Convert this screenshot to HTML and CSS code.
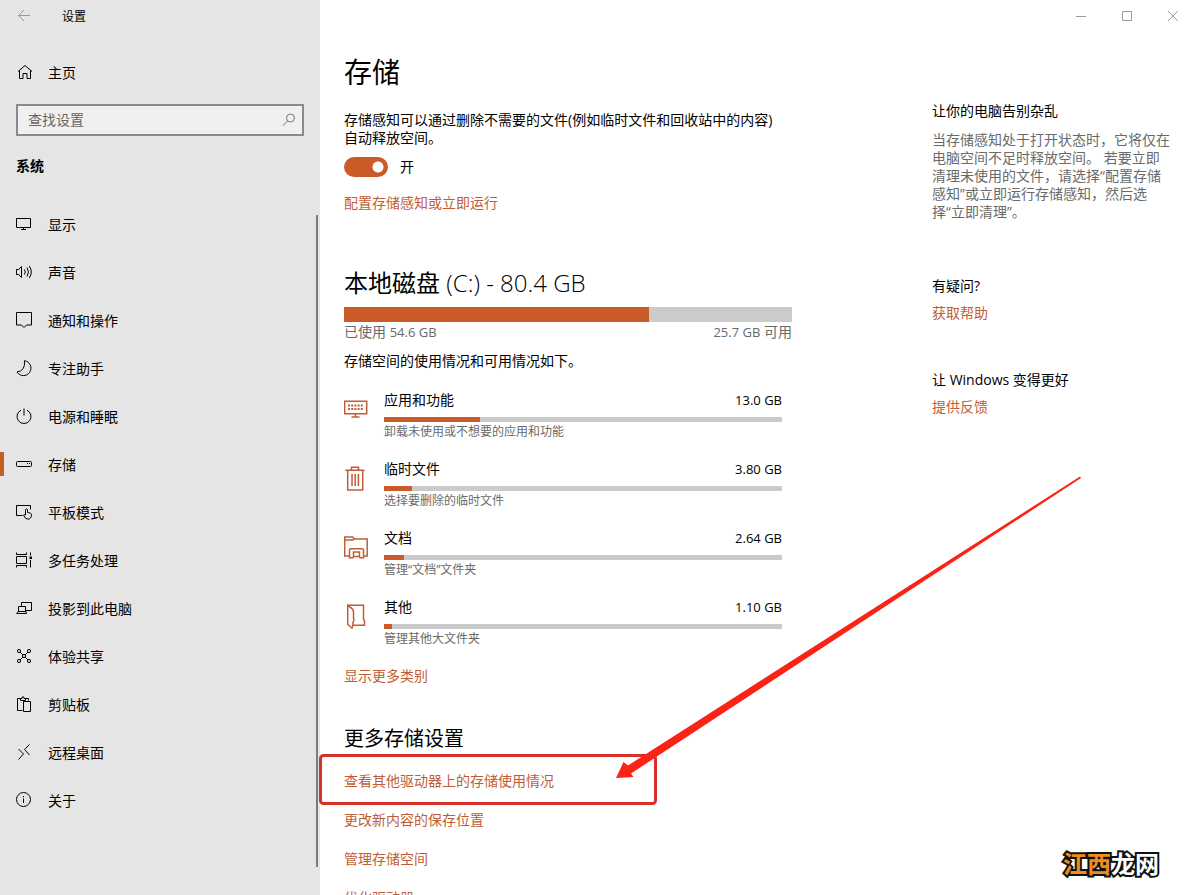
FILE: index.html
```html
<!DOCTYPE html>
<html lang="zh-CN">
<head>
<meta charset="utf-8">
<title>设置</title>
<meta name="viewport" content="width=device-width, initial-scale=1">
<link rel="stylesheet" href="styles.css">
</head>
<body>
<div class="window">
  <aside class="sidebar">
    <div class="app-bar">
      <button class="back" type="button" aria-label="返回">
        <svg width="14" height="14" viewBox="0 0 14 14"><path d="M13 6.500H1.500M7 1 1.500 6.500 7 12"/></svg>
      </button>
      <span class="app-name">设置</span>
    </div>
    <a class="home" href="#">
      <svg class="icon" width="16" height="16" viewBox="0 0 16 16"><path d="M2 7.500 9 1.500l7 6M3.500 6.500v8h3.500v-5h4v5h3.500v-8"/></svg>
      <span>主页</span>
    </a>
    <div class="search">
      <input type="search" aria-label="查找设置" placeholder="查找设置">
      <svg width="14" height="14" viewBox="0 0 14 14"><circle cx="8.500" cy="5" r="4"/><path d="M5.500 8 1 12.700"/></svg>
    </div>
    <h2 class="group">系统</h2>
    <nav class="nav">
      <a href="#"><svg class="icon" width="16" height="16" viewBox="0 0 16 16"><path d="M.5 2.500h14v9H.5zM7.500 11.500v2M5 13.500h5"/></svg><span>显示</span></a>
      <a href="#"><svg class="icon" width="16" height="16" viewBox="0 0 16 16"><path d="M.5 5.500h2.200L5.500 2.500v11L2.700 10.500H.5zM8.500 5.500q1.500 2.500 0 5M11 3.500q3 4.500 0 9M13.300 2q4 6 0 12"/></svg><span>声音</span></a>
      <a href="#"><svg class="icon" width="16" height="16" viewBox="0 0 16 16"><path d="M.5.500h15v12.500h-5L8 15.500 5.500 13h-5z"/></svg><span>通知和操作</span></a>
      <a href="#"><svg class="icon" width="16" height="16" viewBox="0 0 16 16"><path d="M8.500.700A7.500 7.500 0 1 1 1 12Q9.500 11 8.500.700z"/></svg><span>专注助手</span></a>
      <a href="#"><svg class="icon" width="16" height="16" viewBox="0 0 16 16"><path d="M8 .5v7M5 2.200a7 7 0 1 0 6 0"/></svg><span>电源和睡眠</span></a>
      <a href="#" class="current" aria-current="page"><svg class="icon" width="16" height="16" viewBox="0 0 16 16"><rect x=".5" y="5.500" width="15" height="5" rx="1"/><path d="M11 7.500h1M13 7.500h1"/></svg><span>存储</span></a>
      <a href="#"><svg class="icon" width="16" height="16" viewBox="0 0 16 16"><path d="M6.500 11.500h-6v-10h14v4M9.500 11V5.500q1-1.500 2 0v3l3 .7q1 .3 1 1.500-.2 4.500-3.500 4.500Q9 15.200 7.500 11q.8-1 2 0"/></svg><span>平板模式</span></a>
      <a href="#"><svg class="icon" width="16" height="16" viewBox="0 0 16 16"><path d="M.5.500v2h10v-2M.5 4.500h10v7H.5zM.5 15.500v-2h10v2M14.500.500v3M14.500 8v7.500"/><rect x="14" y="5" width="1.500" height="1.500"/></svg><span>多任务处理</span></a>
      <a href="#"><svg class="icon" width="16" height="16" viewBox="0 0 16 16"><path d="M5.500 6V2.500h10v8H10M2.500 11.500v-5h7v5M2 11.500h8l.5 2H.7z"/></svg><span>投影到此电脑</span></a>
      <a href="#"><svg class="icon" width="16" height="16" viewBox="0 0 16 16"><circle cx="3" cy="3" r="1.600"/><circle cx="13" cy="3" r="1.600"/><circle cx="3" cy="13" r="1.600"/><circle cx="13" cy="13" r="1.600"/><circle cx="8" cy="8" r="1.600"/><path d="m4 4 3 3M12 4 9 7M4 12l3-3M12 12 9 9"/></svg><span>体验共享</span></a>
      <a href="#"><svg class="icon" width="16" height="16" viewBox="0 0 16 16"><path d="M6.500 14.500h-5v-12h3M9.500 2.500h3v2M4.500 4.500v-2H6q0-2 1-2t1 2h1.500v2zM7.500 5.500h7v10h-7z"/></svg><span>剪贴板</span></a>
      <a href="#"><svg class="icon" width="16" height="16" viewBox="0 0 16 16"><path d="m2.500 5 5 5-5 5.500M13.500.500l-5 5 5 5.500"/></svg><span>远程桌面</span></a>
      <a href="#"><svg class="icon" width="16" height="16" viewBox="0 0 16 16"><circle cx="7.500" cy="7.500" r="7"/><path d="M7.500 6.500V11M7.500 4v1.300"/></svg><span>关于</span></a>
    </nav>
  </aside>

  <div class="page">
    <div class="title-bar">
      <button type="button" aria-label="最小化"><svg width="12" height="12" viewBox="0 0 12 12"><path d="M1 6.500h10"/></svg></button>
      <button type="button" aria-label="最大化"><svg width="12" height="12" viewBox="0 0 12 12"><path d="M1.500 1.500h9v9h-9z"/></svg></button>
      <button type="button" aria-label="关闭"><svg width="12" height="12" viewBox="0 0 12 12"><path d="m1 1 10 10M11 1 1 11"/></svg></button>
    </div>
    <div class="columns">
      <main class="content">
        <h1>存储</h1>
        <p class="intro">存储感知可以通过删除不需要的文件(例如临时文件和回收站中的内容)自动释放空间。</p>
        <label class="switch"><input type="checkbox" role="switch" checked><span>开</span></label>
        <a class="link" href="#">配置存储感知或立即运行</a>

        <h2 class="disk">本地磁盘 <span>(C:) - 80.4 GB</span></h2>
        <div class="bar bar-large"><div class="fill" style="width:68%"></div></div>
        <div class="usage"><span>已使用 <span class="num">54.6 GB</span></span><span><span class="num">25.7 GB</span> 可用</span></div>
        <p class="summary">存储空间的使用情况和可用情况如下。</p>

        <ul class="categories">
          <li>
            <svg width="24" height="26" viewBox="0 0 24 26"><path d="M.7 4.200h22v12.500H.7zM11.500 17v2.500M7.500 20h8"/><path class="dots" d="M4 8.500h15M4 12h15"/></svg>
            <div class="category">
              <div class="line"><a href="#">应用和功能</a><span class="num">13.0 GB</span></div>
              <div class="bar"><div class="fill" style="width:24%"></div></div>
              <small>卸载未使用或不想要的应用和功能</small>
            </div>
          </li>
          <li>
            <svg width="24" height="26" viewBox="0 0 24 26"><path d="M1.500 4.200h19M7.500 4V1.200h7V4M3.700 4.500v19.500h15V4.500M8 8v12M11.200 8v12M14.400 8v12"/></svg>
            <div class="category">
              <div class="line"><a href="#">临时文件</a><span class="num">3.80 GB</span></div>
              <div class="bar"><div class="fill" style="width:7%"></div></div>
              <small>选择要删除的临时文件</small>
            </div>
          </li>
          <li>
            <svg width="24" height="26" viewBox="0 0 24 26"><path d="M5.500 21H.7V2h8l1.500 2h13v17h-4M.7 5h8l1.500-1M5.500 22.700v-8l1-1h12l1 1v8h-3.500l-.5-1.200H9.500L9 22.700zM9.500 21v-4h6v4"/></svg>
            <div class="category">
              <div class="line"><a href="#">文档</a><span class="num">2.64 GB</span></div>
              <div class="bar"><div class="fill" style="width:5%"></div></div>
              <small>管理“文档”文件夹</small>
            </div>
          </li>
          <li>
            <svg width="24" height="26" viewBox="0 0 24 26"><path d="M4 1.200h15.500v14l1 2v4H9M3.700 1.200v19l4.300 4q1-1.500 1-6 1.500-2 .5-4V8q0-3-3-4.500z"/></svg>
            <div class="category">
              <div class="line"><a href="#">其他</a><span class="num">1.10 GB</span></div>
              <div class="bar"><div class="fill" style="width:2%"></div></div>
              <small>管理其他大文件夹</small>
            </div>
          </li>
        </ul>
        <a class="link more" href="#">显示更多类别</a>

        <h3>更多存储设置</h3>
        <div class="links">
          <a class="link" href="#">查看其他驱动器上的存储使用情况</a>
          <a class="link" href="#">更改新内容的保存位置</a>
          <a class="link" href="#">管理存储空间</a>
          <a class="link" href="#">优化驱动器</a>
        </div>
      </main>

      <aside class="help">
        <h4>让你的电脑告别杂乱</h4>
        <p>当存储感知处于打开状态时，它将仅在电脑空间不足时释放空间。 若要立即清理未使用的文件，请选择“配置存储感知”或立即运行存储感知，然后选<span class="keep">择“立即清理”。</span></p>
        <h4 class="question">有疑问?</h4>
        <a class="link" href="#">获取帮助</a>
        <h4 class="feedback">让 Windows 变得更好</h4>
        <a class="link" href="#">提供反馈</a>
      </aside>
    </div>
  </div>

  <svg class="annotation" width="764" height="332" viewBox="0 0 764 332" aria-hidden="true">
    <rect x="1.500" y="280.500" width="335" height="48" rx="3"/>
    <path d="M297 303 304.500 287 309 290.500 761 1.500 762 3 312 298.500 314.500 302z"/>
  </svg>
  <div class="watermark"><span>江西</span>龙网</div>
</div>
</body>
</html>
```

FILE: styles.css
```css
* { box-sizing: border-box; margin: 0; padding: 0; }

:root {
  --accent: #ca5a28;
  --link: #bf5d38;
  --track: #cbcbcb;
  --muted: #6a6a6a;
}

body {
  font: 14px/20px "Open Sans", "Noto Sans CJK SC", sans-serif;
  color: #000;
  background: #fff;
}

a { color: inherit; text-decoration: none; }
button { border: 0; background: none; display: grid; place-items: center; }
svg { fill: none; stroke: currentColor; flex: none; }
h1, h3, h4 { font-weight: 400; }

.window {
  position: relative;
  display: flex;
  height: 100vh;
  overflow: hidden;
}

/* Sidebar */
.sidebar {
  position: relative;
  flex: 0 0 320px;
  background: #e5e5e5;
}
.sidebar::after {
  content: "";
  position: absolute;
  top: 215px;
  bottom: 28px;
  right: 2px;
  width: 2px;
  background: #7b7b7b;
}
.app-bar { display: flex; height: 32px; align-items: center; }
.back { width: 48px; height: 32px; color: #999; }
.app-name { padding: 2px 0 0 14px; font-size: 12px; }
.home {
  display: flex;
  align-items: center;
  gap: 16px;
  height: 40px;
  margin-top: 20px;
  padding-left: 16px;
}
.home span, .nav span { padding-top: 2px; }
.icon { overflow: visible; }
.search {
  display: flex;
  align-items: center;
  height: 32px;
  margin: 12px 16px 0;
  padding: 0 6px 0 10px;
  border: 2px solid #8a8a8a;
  background: #f0f0f0;
  color: #777;
}
.search input {
  flex: 1;
  min-width: 0;
  border: 0;
  outline: 0;
  background: none;
  font: inherit;
}
.search input::placeholder { color: #666; opacity: 1; }
.group { margin: 20px 16px 24px; font-size: 14px; font-weight: 700; }
.nav a {
  display: flex;
  align-items: center;
  gap: 16px;
  height: 48px;
  padding-left: 16px;
}
.nav .current { background: linear-gradient(var(--accent), var(--accent)) 0 50% / 4px 24px no-repeat; }

/* Page */
.page { flex: 1; min-width: 0; }
.title-bar { display: flex; justify-content: flex-end; height: 32px; }
.title-bar button { width: 46px; height: 32px; color: #999; }
.columns { display: flex; gap: 140px; padding-left: 24px; }
.content { flex: 0 1 448px; padding-top: 20px; }
.link { color: var(--link); }

h1 { font-size: 28px; line-height: 40px; }
.intro { max-width: 440px; margin-top: 19px; line-height: 18px; }
.switch { display: flex; align-items: center; gap: 12px; height: 20px; margin: 10px 0 16px; }
.switch input {
  appearance: none;
  width: 44px;
  height: 20px;
  border-radius: 10px;
  background: radial-gradient(circle at 34px 10px, #fff 5px, var(--accent) 6px);
}
.disk { margin: 54px 0 8px; font-size: 24px; line-height: 32px; font-weight: 400; }
.disk span { font-weight: 300; }
.bar { height: 5px; background: var(--track); }
.bar-large { height: 15px; }
.fill { height: 100%; background: var(--accent); }
.usage { display: flex; justify-content: space-between; color: var(--muted); }
.num { font-size: 13px; }
.summary { margin: 9px 0 19px; }

.categories { display: grid; gap: 17px; padding-right: 10px; list-style: none; }
.categories li { display: flex; gap: 16px; }
.categories svg { margin-top: 7px; color: var(--link); stroke-width: 1.500; }
.categories .dots { stroke-width: 2; stroke-dasharray: 2 1.200; }
.category { flex: 1; }
.line { display: flex; justify-content: space-between; margin-bottom: 7px; }
small { display: block; font-size: 12px; color: var(--muted); }
.more { display: block; margin-top: 17px; }
h3 { margin: 39px 0 18px; font-size: 20px; line-height: 28px; }
.links { display: grid; justify-items: start; gap: 19px; }

/* Help column */
.help { flex: 0 1 240px; padding-top: 69px; }
h4 { font-size: 14px; margin-bottom: 7px; }
.help p { margin-top: 10px; line-height: 18px; color: var(--muted); }
.keep { white-space: nowrap; }
.question { margin-top: 55px; }
.feedback { margin-top: 47px; }

/* Overlays */
.annotation { position: absolute; left: 319px; top: 475px; pointer-events: none; }
.annotation rect { stroke: #d8302b; stroke-width: 3; }
.annotation path { stroke: none; fill: #fb2316; }
.watermark {
  position: absolute;
  right: 37px;
  bottom: 15px;
  font-size: 24px;
  line-height: 32px;
  font-weight: 700;
  color: #fff;
  -webkit-text-stroke: 4px #111;
  paint-order: stroke fill;
}
.watermark span { color: #f08c1c; }
```
